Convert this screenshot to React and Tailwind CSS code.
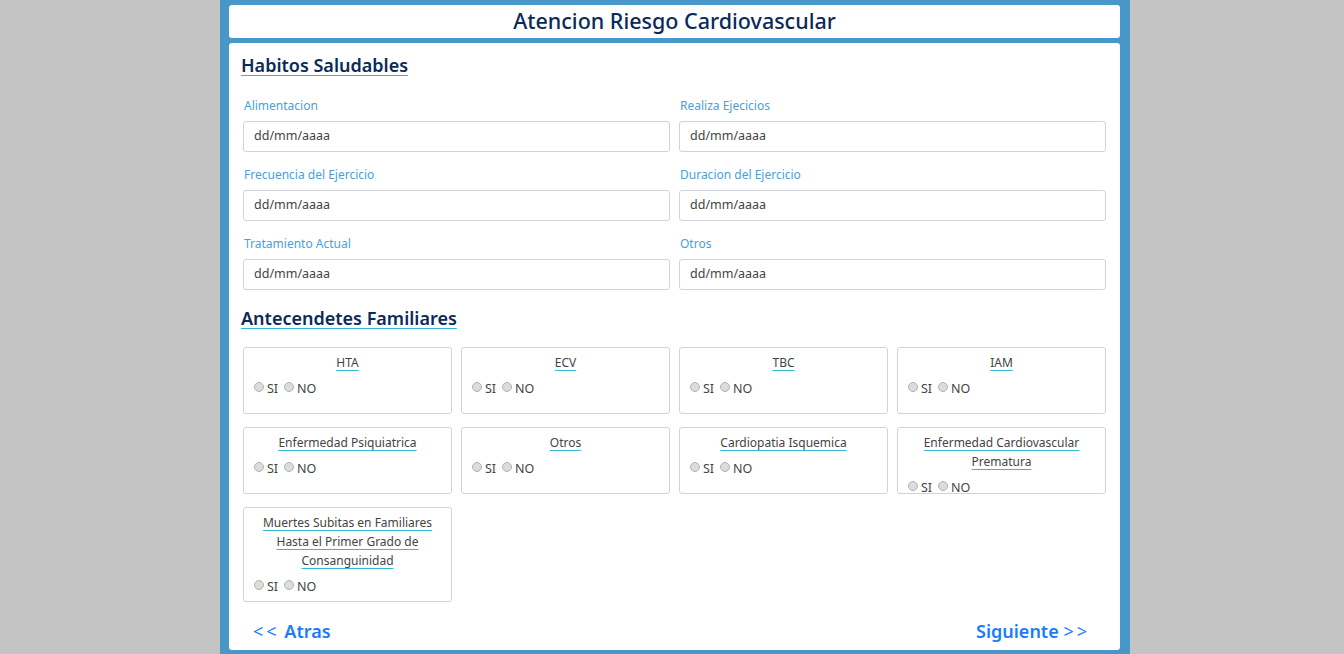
import React from "react";

const font = { fontFamily: '"Noto Sans", "Open Sans", Arial, sans-serif' };

function Field({ label }) {
  return (
    <div className="flex flex-col">
      <label className="text-[12px] leading-[18px] text-[#4a9fd8] pl-[1px] mb-[6px]">{label}</label>
      <div className="h-[31px] border border-[#cfd4da] rounded-[3px] flex items-center pl-[10px] text-[12.5px] text-[#444]">
        dd/mm/aaaa
      </div>
    </div>
  );
}

function Radio({ text }) {
  return (
    <span className="inline-flex items-center">
      <span className="w-[10px] h-[10px] rounded-full border border-[#b3b3b3] bg-[#dcdcdc] mr-[3px] -mt-[4px]"></span>
      <span>{text}</span>
    </span>
  );
}

function Card({ lines, fixed }) {
  return (
    <div className={"border border-[#cfd4da] rounded-[3px] px-[10px] pt-[5px] pb-[4px] " + (fixed ? "h-[67px]" : "min-h-[67px]")}>
      <div className="text-center text-[12px] leading-[19px] text-[#444]">
        {lines.map((l, i) => (
          <div key={i}>
            <span className="underline decoration-[#35b8d6] underline-offset-[3px]">{l}</span>
          </div>
        ))}
      </div>
      <div className="flex gap-[6px] text-[12.5px] leading-[20px] text-[#444] mt-[7px]">
        <Radio text="SI" />
        <Radio text="NO" />
      </div>
    </div>
  );
}

export default function App() {
  return (
    <div className="w-[1344px] h-[654px] bg-[#c4c4c4] overflow-hidden" style={font}>
      <div className="w-[910px] h-[654px] ml-[220px] bg-[#4897c9] pl-[9px] pr-[10px] pt-[5px] flex flex-col gap-[5px]">
        <div className="h-[33px] bg-white rounded-[3px] flex items-center justify-center text-[21.5px] font-medium text-[#0b2a59]">
          Atencion Riesgo Cardiovascular
        </div>
        <div className="h-[607px] bg-white rounded-[3px] pl-[12px] pr-[14px] pt-[8px]">
          <h2 className="text-[18px] font-semibold text-[#0b2a59] underline decoration-[#35b8d6] underline-offset-[3px] leading-[28px]">
            Habitos Saludables
          </h2>
          <div className="grid grid-cols-2 gap-x-[9px] gap-y-[14px] mt-[18px] pl-[2px]">
            <Field label="Alimentacion" />
            <Field label="Realiza Ejecicios" />
            <Field label="Frecuencia del Ejercicio" />
            <Field label="Duracion del Ejercicio" />
            <Field label="Tratamiento Actual" />
            <Field label="Otros" />
          </div>
          <h2 className="text-[18px] font-semibold text-[#0b2a59] underline decoration-[#35b8d6] underline-offset-[3px] leading-[28px] mt-[14px]">
            Antecendetes Familiares
          </h2>
          <div className="grid grid-cols-4 gap-x-[9px] gap-y-[13px] mt-[15px] pl-[2px]">
            <Card lines={["HTA"]} fixed />
            <Card lines={["ECV"]} fixed />
            <Card lines={["TBC"]} fixed />
            <Card lines={["IAM"]} fixed />
            <Card lines={["Enfermedad Psiquiatrica"]} fixed />
            <Card lines={["Otros"]} fixed />
            <Card lines={["Cardiopatia Isquemica"]} fixed />
            <Card lines={["Enfermedad Cardiovascular", "Prematura"]} fixed />
            <Card lines={["Muertes Subitas en Familiares", "Hasta el Primer Grado de", "Consanguinidad"]} />
          </div>
          <div className="flex justify-between items-center mt-[16px] pl-[12px] pr-[16px] text-[18px] text-[#1a7cfb]">
            <span><span className="font-normal tracking-[3px]">&lt;&lt;</span> <span className="font-semibold">Atras</span></span>
            <span><span className="font-semibold">Siguiente</span> <span className="font-normal tracking-[3px]">&gt;&gt;</span></span>
          </div>
        </div>
      </div>
    </div>
  );
}
